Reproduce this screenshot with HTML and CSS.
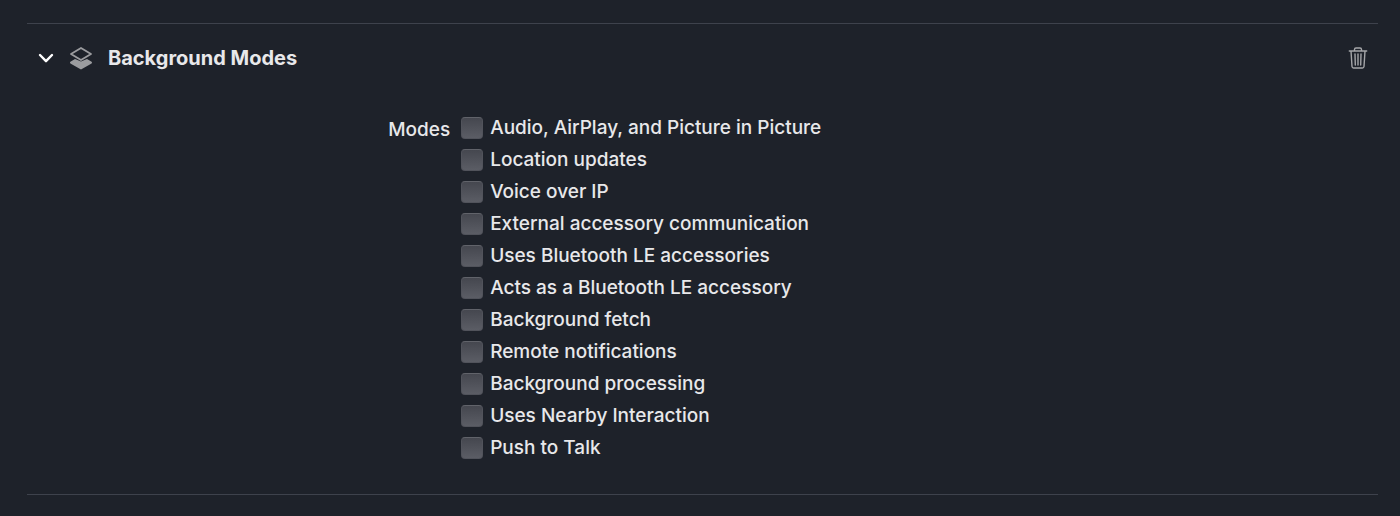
FILE: index.html
```html
<!DOCTYPE html>
<html lang="en">
<head>
<meta charset="utf-8">
<title>Background Modes</title>
<link rel="stylesheet" href="styles.css">
</head>
<body>
<main class="capability">
  <header class="header">
    <button class="icon-button" type="button" aria-label="Collapse section" aria-expanded="true">
      <svg class="chevron" width="16" height="10" viewBox="0 0 16 10" aria-hidden="true"><path d="M2 2 8 8.200 14 2"/></svg>
    </button>
    <svg class="layers" width="24" height="24" viewBox="0 0 24 24" aria-hidden="true">
      <path class="layer-solid" d="M6 13 12 15.600 18 13 22.600 15.700Q23.500 16.500 22.600 17.400L12 23.400 1.400 17.400Q.5 16.500 1.400 15.700Z"/>
      <path class="layer-line" d="M12 2 22 8 12 14 2 8Z"/>
    </svg>
    <h1 class="title">Background Modes</h1>
    <button class="icon-button delete" type="button" aria-label="Remove capability">
      <svg class="trash" width="20" height="24" viewBox="0 0 20 24" aria-hidden="true"><path d="M1.300 5H18.700M6.500 5V3.500Q6.500 2 8 2H12Q13.500 2 13.500 3.500V5M3 5 4 20.500Q4.200 22 5.500 22H14.500Q15.800 22 16 20.500L17 5M7 8 7.300 19M10 8V19M13 8 12.700 19"/></svg>
    </button>
  </header>
  <div class="modes" role="group" aria-labelledby="modes-label">
    <span class="modes-label" id="modes-label">Modes</span>
    <div class="options">
      <label class="option"><input class="checkbox" type="checkbox">Audio, AirPlay, and Picture in Picture</label>
      <label class="option"><input class="checkbox" type="checkbox">Location updates</label>
      <label class="option"><input class="checkbox" type="checkbox">Voice over IP</label>
      <label class="option"><input class="checkbox" type="checkbox">External accessory communication</label>
      <label class="option"><input class="checkbox" type="checkbox">Uses Bluetooth LE accessories</label>
      <label class="option"><input class="checkbox" type="checkbox">Acts as a Bluetooth LE accessory</label>
      <label class="option"><input class="checkbox" type="checkbox">Background fetch</label>
      <label class="option"><input class="checkbox" type="checkbox">Remote notifications</label>
      <label class="option"><input class="checkbox" type="checkbox">Background processing</label>
      <label class="option"><input class="checkbox" type="checkbox">Uses Nearby Interaction</label>
      <label class="option"><input class="checkbox" type="checkbox">Push to Talk</label>
    </div>
  </div>
</main>
</body>
</html>
```
FILE: styles.css
```css
* { box-sizing: border-box; }
body {
  margin: 0;
  padding: 23px 22px 20px 27px;
  background: #1e222a;
  color: #e8e8ea;
  font: 500 19px/32px Inter, "Liberation Sans", sans-serif;
}
.capability {
  border-top: 1px solid #3e424c;
  border-bottom: 1px solid #3e424c;
  padding-bottom: 30px;
}
.header {
  display: flex;
  align-items: center;
  height: 68px;
  padding: 0 10px 0 11px;
}
.icon-button {
  display: flex;
  padding: 0;
  border: 0;
  background: none;
}
.delete { margin-left: auto; }
.chevron, .trash {
  fill: none;
  stroke-linecap: round;
  stroke-linejoin: round;
}
.chevron { stroke: #fff; stroke-width: 2.4; }
.layers { margin: 0 15px; }
.layer-solid { fill: #9b9c9f; }
.layer-line {
  fill: #1e222a;
  stroke: #9b9c9f;
  stroke-width: 1.8;
  stroke-linejoin: round;
}
.trash { stroke: #a5a6a9; stroke-width: 1.4; }
.title {
  margin: 0;
  font-size: 20px;
  font-weight: 700;
}
.modes {
  display: grid;
  grid-template-columns: 6fr 13fr;
  gap: 11px;
  padding-top: 20px;
}
.modes-label { padding-top: 2px; text-align: right; }
.options {
  display: flex;
  flex-direction: column;
  align-items: flex-start;
}
.option {
  display: flex;
  align-items: center;
  gap: 7px;
}
.checkbox {
  appearance: none;
  width: 22px;
  height: 22px;
  margin: 0;
  border: 1px solid #51535b;
  border-top-color: #61636a;
  border-radius: 4px;
  background: linear-gradient(#45474f, #5b5d65);
}
.checkbox:checked { background: #2f7cf6; }
```
